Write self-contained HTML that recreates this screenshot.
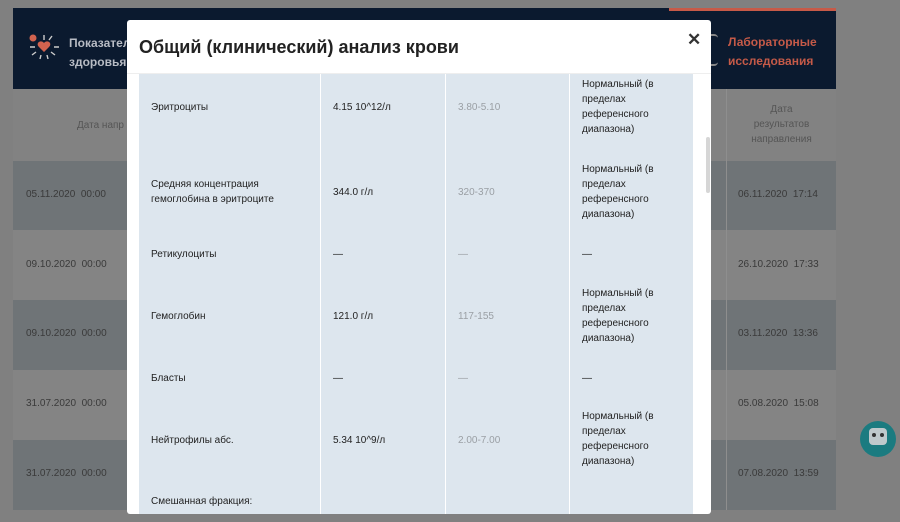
<!DOCTYPE html>
<html><head><meta charset="utf-8"><style>
*{margin:0;padding:0;box-sizing:border-box}
body{width:900px;height:522px;background:#808080;position:relative;overflow:hidden;font-family:"Liberation Sans",Arial,sans-serif}
.a{position:absolute}
.t{position:absolute;font-size:10px;color:#222;line-height:15px}
.g{color:#9a9fa4}
.bg{color:#3a3a3a;font-size:10px}
</style></head><body>
<!-- background page -->
<div class="a" style="left:13px;top:8px;width:823px;height:81px;background:#0b1a2f"></div>
<div class="a" style="left:669px;top:8px;width:167px;height:3px;background:#c75a48"></div>
<div class="a" style="left:13px;top:89px;width:823px;height:72px;background:#828282"></div>
<div class="a" style="left:13px;top:161px;width:823px;height:69px;background:#6f7477"></div>
<div class="a" style="left:13px;top:230px;width:823px;height:70px;background:#848484"></div>
<div class="a" style="left:13px;top:300px;width:823px;height:70px;background:#6f7477"></div>
<div class="a" style="left:13px;top:370px;width:823px;height:70px;background:#848484"></div>
<div class="a" style="left:13px;top:440px;width:823px;height:70px;background:#6f7477"></div>
<div class="a" style="left:726px;top:89px;width:1px;height:421px;background:#8e8e8e"></div>
<svg class="a" style="left:28px;top:33px" width="36" height="34" viewBox="0 0 36 34"><circle cx="5" cy="5" r="3.5" fill="#d2634f"/><path d="M11 14c-4-4 2-8 5-4 3-4 9 0 5 4l-5 5z" fill="#d2634f"/><g stroke="#ccc" stroke-width="1.4"><path d="M16 2v5M24 3l-3 4M2 14h5M26 14h5M4 22l4-3M27 22l-4-3M12 26l1-4M20 26l-1-4"/></g></svg>
<div class="a" style="left:69px;top:34px;color:#b8bcc4;font-size:12px;font-weight:bold;line-height:19px">Показатели<br>здоровья</div>
<div class="a" style="left:728px;top:33px;color:#c55a48;font-size:12px;font-weight:bold;line-height:19px">Лабораторные<br>исследования</div>
<div class="a" style="left:704px;top:34px;width:14px;height:32px;border:2px solid #888;border-radius:4px;border-right:none"></div>
<div class="t bg" style="left:77px;top:118px;color:#555">Дата напр</div>
<div class="t" style="left:727px;top:102px;width:109px;text-align:center;color:#555;line-height:15px">Дата<br>результатов<br>направления</div>
<div class="t bg" style="left:26px;top:187px">05.11.2020&nbsp; 00:00</div>
<div class="t bg" style="left:26px;top:257px">09.10.2020&nbsp; 00:00</div>
<div class="t bg" style="left:26px;top:326px">09.10.2020&nbsp; 00:00</div>
<div class="t bg" style="left:26px;top:396px">31.07.2020&nbsp; 00:00</div>
<div class="t bg" style="left:26px;top:466px">31.07.2020&nbsp; 00:00</div>
<div class="t bg" style="left:738px;top:187px">06.11.2020&nbsp; 17:14</div>
<div class="t bg" style="left:738px;top:257px">26.10.2020&nbsp; 17:33</div>
<div class="t bg" style="left:738px;top:326px">03.11.2020&nbsp; 13:36</div>
<div class="t bg" style="left:738px;top:396px">05.08.2020&nbsp; 15:08</div>
<div class="t bg" style="left:738px;top:466px">07.08.2020&nbsp; 13:59</div>
<div class="a" style="left:860px;top:421px;width:36px;height:36px;border-radius:50%;background:#1b7b80"></div>
<div class="a" style="left:869px;top:428px;width:18px;height:17px;border-radius:4px;background:#bfc9cc"></div>
<div class="a" style="left:872px;top:433px;width:4px;height:4px;border-radius:50%;background:#333"></div>
<div class="a" style="left:880px;top:433px;width:4px;height:4px;border-radius:50%;background:#333"></div>
<!-- modal -->
<div class="a" style="left:127px;top:20px;width:584px;height:494px;background:#fff;border-radius:3px"></div>
<div class="a" style="left:139px;top:28px;font-size:18px;font-weight:bold;color:#222;line-height:38px">Общий (клинический) анализ крови</div>
<div class="a" style="left:687px;top:30px;font-size:17px;font-weight:bold;color:#333">✕</div>
<div class="a" style="left:127px;top:73px;width:584px;height:1px;background:#eee"></div>
<div class="a" style="left:139px;top:74px;width:554px;height:440px;background:#dde6ee"></div>
<div class="a" style="left:320px;top:74px;width:1px;height:440px;background:#fff"></div>
<div class="a" style="left:445px;top:74px;width:1px;height:440px;background:#fff"></div>
<div class="a" style="left:569px;top:74px;width:1px;height:440px;background:#fff"></div>
<div class="a" style="left:706px;top:137px;width:4px;height:56px;background:#d6d6d6;border-radius:2px"></div>
<div class="t" style="left:151px;top:100px">Эритроциты</div>
<div class="t" style="left:333px;top:100px">4.15 10^12/л</div>
<div class="t g" style="left:458px;top:100px">3.80-5.10</div>
<div class="t" style="left:582px;top:77px">Нормальный (в<br>пределах<br>референсного<br>диапазона)</div>
<div class="t" style="left:151px;top:177px">Средняя концентрация<br>гемоглобина в эритроците</div>
<div class="t" style="left:333px;top:185px">344.0 г/л</div>
<div class="t g" style="left:458px;top:185px">320-370</div>
<div class="t" style="left:582px;top:162px">Нормальный (в<br>пределах<br>референсного<br>диапазона)</div>
<div class="t" style="left:151px;top:247px">Ретикулоциты</div>
<div class="t" style="left:333px;top:247px">—</div>
<div class="t g" style="left:458px;top:247px">—</div>
<div class="t" style="left:582px;top:247px">—</div>
<div class="t" style="left:151px;top:309px">Гемоглобин</div>
<div class="t" style="left:333px;top:309px">121.0 г/л</div>
<div class="t g" style="left:458px;top:309px">117-155</div>
<div class="t" style="left:582px;top:286px">Нормальный (в<br>пределах<br>референсного<br>диапазона)</div>
<div class="t" style="left:151px;top:371px">Бласты</div>
<div class="t" style="left:333px;top:371px">—</div>
<div class="t g" style="left:458px;top:371px">—</div>
<div class="t" style="left:582px;top:371px">—</div>
<div class="t" style="left:151px;top:433px">Нейтрофилы абс.</div>
<div class="t" style="left:333px;top:433px">5.34 10^9/л</div>
<div class="t g" style="left:458px;top:433px">2.00-7.00</div>
<div class="t" style="left:582px;top:409px">Нормальный (в<br>пределах<br>референсного<br>диапазона)</div>
<div class="t" style="left:151px;top:494px">Смешанная фракция:</div>
<div class="a" style="left:127px;top:514px;width:584px;height:8px;background:#808080"></div>
</body></html>
